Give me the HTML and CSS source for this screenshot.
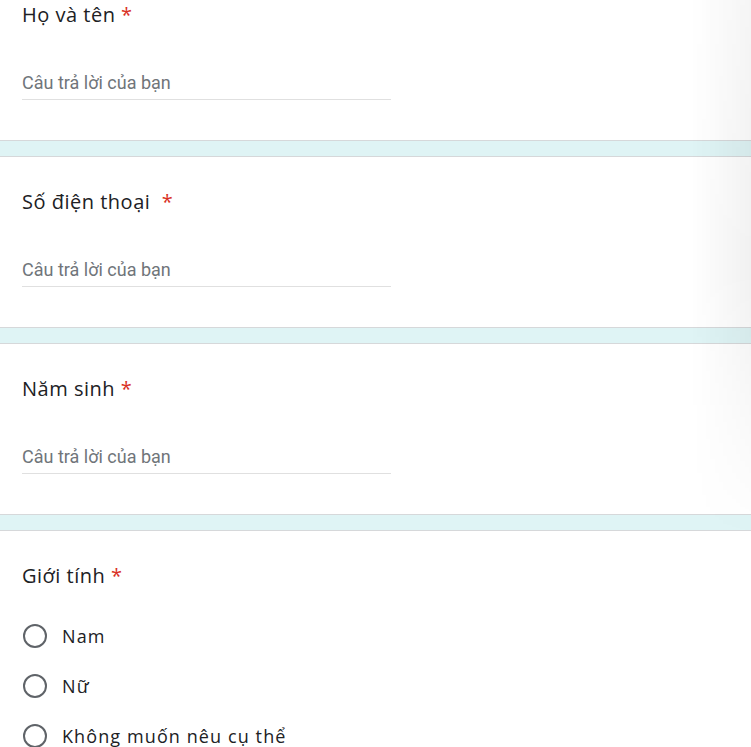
FILE: index.html
```html
<!DOCTYPE html>
<html lang="vi">
<head>
<meta charset="utf-8">
<title>Form</title>
<link rel="stylesheet" href="styles.css">
</head>
<body>
<div class="page">
  <div class="card card-first">
    <div class="q-title">Họ và tên <span class="req">*</span></div>
    <div class="answer">Câu trả lời của bạn</div>
  </div>
  <div class="band"></div>
  <div class="card">
    <div class="q-title">Số điện thoại &nbsp;<span class="req">*</span></div>
    <div class="answer">Câu trả lời của bạn</div>
  </div>
  <div class="band"></div>
  <div class="card">
    <div class="q-title">Năm sinh <span class="req">*</span></div>
    <div class="answer">Câu trả lời của bạn</div>
  </div>
  <div class="band"></div>
  <div class="card card-last">
    <div class="q-title">Giới tính <span class="req">*</span></div>
    <div class="options">
      <div class="option"><span class="radio"></span><span class="opt-label">Nam</span></div>
      <div class="option"><span class="radio"></span><span class="opt-label">Nữ</span></div>
      <div class="option"><span class="radio"></span><span class="opt-label">Không muốn nêu cụ thể</span></div>
    </div>
  </div>
  <div class="edge-shadow"></div>
</div>
</body>
</html>
```

FILE: styles.css
```css
html, body {
  margin: 0;
  padding: 0;
  background: #ffffff;
}
body {
  overflow: hidden;
  height: 747px;
}
.page {
  position: relative;
  width: 751px;
}
.card {
  background: #ffffff;
  padding: 33px 22px 40px 22px;
  display: flex;
  flex-direction: column;
}
.card-first {
  padding-top: 3px;
}
.card-last {
  padding-bottom: 0;
}
.band {
  height: 15px;
  background: #dff4f5;
  border-top: 1px solid #d6d8da;
  border-bottom: 1px solid #d6d8da;
}
.q-title {
  font-family: "Open Sans", "DejaVu Sans", sans-serif;
  font-size: 20px;
  line-height: 23px;
  height: 24px;
  color: #202124;
  letter-spacing: 0.5px;
  white-space: pre;
}
.req {
  color: #d93025;
}
.answer {
  margin-top: 41px;
  width: 369px;
  height: 31px;
  line-height: 30px;
  border-bottom: 1px solid #e0e0e0;
  font-family: Roboto, "Liberation Sans", sans-serif;
  font-size: 18px;
  color: #70757a;
}
.options {
  margin-top: 23px;
  display: flex;
  flex-direction: column;
}
.option {
  height: 50px;
  display: flex;
  align-items: center;
}
.radio {
  width: 20px;
  height: 20px;
  border: 2px solid #5f6368;
  border-radius: 50%;
  box-sizing: content-box;
  margin-left: 1px;
  flex: none;
}
.opt-label {
  margin-left: 15px;
  font-family: "Open Sans", "DejaVu Sans", sans-serif;
  font-size: 18px;
  color: #202124;
  letter-spacing: 1.1px;
}
.edge-shadow {
  position: absolute;
  top: 0;
  right: 0;
  width: 60px;
  height: 540px;
  background: linear-gradient(to right, rgba(0,0,0,0) 0%, rgba(0,0,0,0.055) 100%);
  -webkit-mask-image: linear-gradient(to bottom, rgba(0,0,0,0.7) 0%, #000 50%, rgba(0,0,0,0) 100%);
  mask-image: linear-gradient(to bottom, rgba(0,0,0,0.7) 0%, #000 50%, rgba(0,0,0,0) 100%);
  pointer-events: none;
}
```
